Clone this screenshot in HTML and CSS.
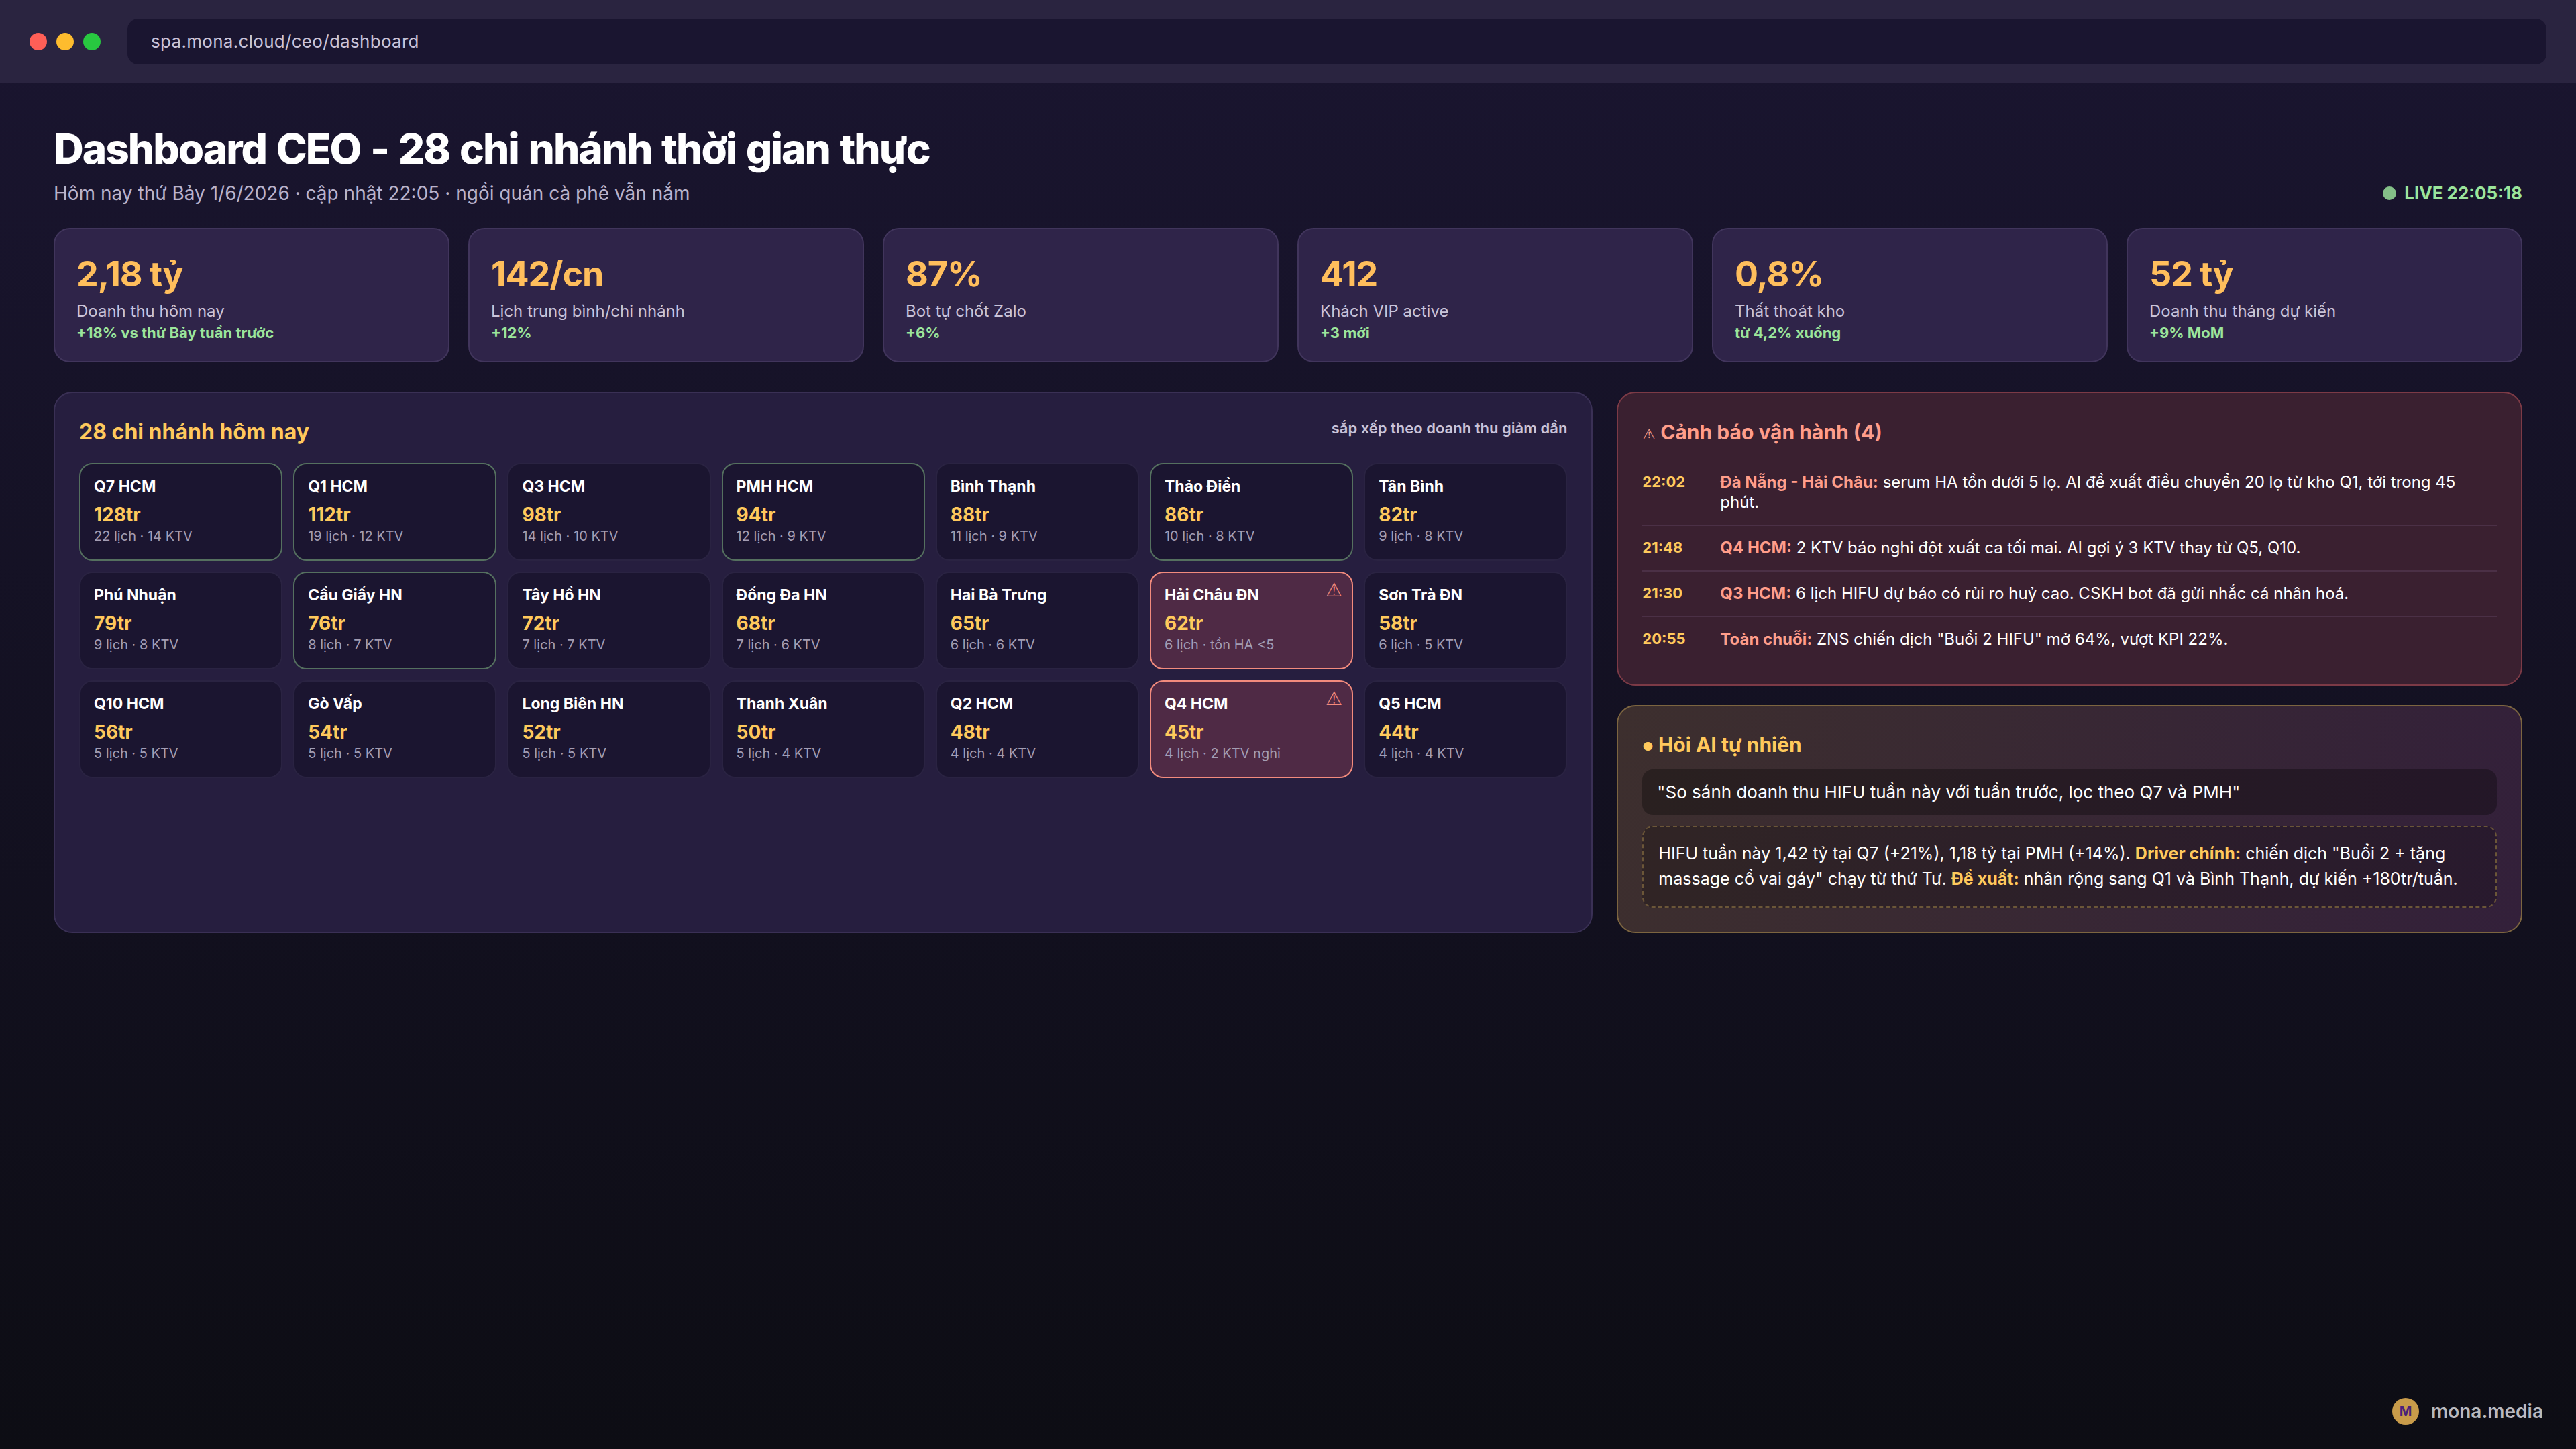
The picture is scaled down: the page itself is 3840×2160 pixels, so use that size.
FILE: index.html
```html
<!DOCTYPE html>
<html lang="vi">
<head>
    <meta charset="UTF-8">
    <title>Dashboard CEO - Mona</title>
    <link rel="stylesheet" href="styles.css">
</head>
<body>
    <div class="browser-bar">
        <div class="dots">
            <span class="dot red"></span>
            <span class="dot yellow"></span>
            <span class="dot green"></span>
        </div>
        <div class="url">spa.mona.cloud/ceo/dashboard</div>
    </div>

    <main class="page">
        <header class="page-head">
            <div>
                <h1>Dashboard CEO - 28 chi nhánh thời gian thực</h1>
                <p class="sub">Hôm nay thứ Bảy 1/6/2026 · cập nhật 22:05 · ngồi quán cà phê vẫn nắm</p>
            </div>
            <div class="live"><span class="live-dot"></span>LIVE 22:05:18</div>
        </header>

        <section class="stats">
            <div class="stat">
                <div class="stat-value">2,18 tỷ</div>
                <div class="stat-label">Doanh thu hôm nay</div>
                <div class="stat-delta">+18% vs thứ Bảy tuần trước</div>
            </div>
            <div class="stat">
                <div class="stat-value">142/cn</div>
                <div class="stat-label">Lịch trung bình/chi nhánh</div>
                <div class="stat-delta">+12%</div>
            </div>
            <div class="stat">
                <div class="stat-value">87%</div>
                <div class="stat-label">Bot tự chốt Zalo</div>
                <div class="stat-delta">+6%</div>
            </div>
            <div class="stat">
                <div class="stat-value">412</div>
                <div class="stat-label">Khách VIP active</div>
                <div class="stat-delta">+3 mới</div>
            </div>
            <div class="stat">
                <div class="stat-value">0,8%</div>
                <div class="stat-label">Thất thoát kho</div>
                <div class="stat-delta">từ 4,2% xuống</div>
            </div>
            <div class="stat">
                <div class="stat-value">52 tỷ</div>
                <div class="stat-label">Doanh thu tháng dự kiến</div>
                <div class="stat-delta">+9% MoM</div>
            </div>
        </section>

        <section class="columns">
            <div class="panel branches">
                <div class="panel-head">
                    <h2>28 chi nhánh hôm nay</h2>
                    <span class="panel-note">sắp xếp theo doanh thu giảm dần</span>
                </div>
                <div class="branch-grid">
                    <div class="branch top"><div class="b-name">Q7 HCM</div><div class="b-val">128tr</div><div class="b-meta">22 lịch · 14 KTV</div></div>
                    <div class="branch top"><div class="b-name">Q1 HCM</div><div class="b-val">112tr</div><div class="b-meta">19 lịch · 12 KTV</div></div>
                    <div class="branch"><div class="b-name">Q3 HCM</div><div class="b-val">98tr</div><div class="b-meta">14 lịch · 10 KTV</div></div>
                    <div class="branch top"><div class="b-name">PMH HCM</div><div class="b-val">94tr</div><div class="b-meta">12 lịch · 9 KTV</div></div>
                    <div class="branch"><div class="b-name">Bình Thạnh</div><div class="b-val">88tr</div><div class="b-meta">11 lịch · 9 KTV</div></div>
                    <div class="branch top"><div class="b-name">Thảo Điền</div><div class="b-val">86tr</div><div class="b-meta">10 lịch · 8 KTV</div></div>
                    <div class="branch"><div class="b-name">Tân Bình</div><div class="b-val">82tr</div><div class="b-meta">9 lịch · 8 KTV</div></div>

                    <div class="branch"><div class="b-name">Phú Nhuận</div><div class="b-val">79tr</div><div class="b-meta">9 lịch · 8 KTV</div></div>
                    <div class="branch top"><div class="b-name">Cầu Giấy HN</div><div class="b-val">76tr</div><div class="b-meta">8 lịch · 7 KTV</div></div>
                    <div class="branch"><div class="b-name">Tây Hồ HN</div><div class="b-val">72tr</div><div class="b-meta">7 lịch · 7 KTV</div></div>
                    <div class="branch"><div class="b-name">Đống Đa HN</div><div class="b-val">68tr</div><div class="b-meta">7 lịch · 6 KTV</div></div>
                    <div class="branch"><div class="b-name">Hai Bà Trưng</div><div class="b-val">65tr</div><div class="b-meta">6 lịch · 6 KTV</div></div>
                    <div class="branch warn"><span class="b-flag">⚠</span><div class="b-name">Hải Châu ĐN</div><div class="b-val">62tr</div><div class="b-meta">6 lịch · tồn HA &lt;5</div></div>
                    <div class="branch"><div class="b-name">Sơn Trà ĐN</div><div class="b-val">58tr</div><div class="b-meta">6 lịch · 5 KTV</div></div>

                    <div class="branch"><div class="b-name">Q10 HCM</div><div class="b-val">56tr</div><div class="b-meta">5 lịch · 5 KTV</div></div>
                    <div class="branch"><div class="b-name">Gò Vấp</div><div class="b-val">54tr</div><div class="b-meta">5 lịch · 5 KTV</div></div>
                    <div class="branch"><div class="b-name">Long Biên HN</div><div class="b-val">52tr</div><div class="b-meta">5 lịch · 5 KTV</div></div>
                    <div class="branch"><div class="b-name">Thanh Xuân</div><div class="b-val">50tr</div><div class="b-meta">5 lịch · 4 KTV</div></div>
                    <div class="branch"><div class="b-name">Q2 HCM</div><div class="b-val">48tr</div><div class="b-meta">4 lịch · 4 KTV</div></div>
                    <div class="branch warn"><span class="b-flag">⚠</span><div class="b-name">Q4 HCM</div><div class="b-val">45tr</div><div class="b-meta">4 lịch · 2 KTV nghỉ</div></div>
                    <div class="branch"><div class="b-name">Q5 HCM</div><div class="b-val">44tr</div><div class="b-meta">4 lịch · 4 KTV</div></div>
                </div>
            </div>

            <div class="side">
                <div class="panel alerts">
                    <h3 class="alerts-title"><span class="alerts-icon">⚠</span> Cảnh báo vận hành (4)</h3>
                    <div class="alert"><span class="alert-time">22:02</span><p><b>Đà Nẵng - Hải Châu:</b> serum HA tồn dưới 5 lọ. AI đề xuất điều chuyển 20 lọ từ kho Q1, tới trong 45 phút.</p></div>
                    <div class="alert"><span class="alert-time">21:48</span><p><b>Q4 HCM:</b> 2 KTV báo nghỉ đột xuất ca tối mai. AI gợi ý 3 KTV thay từ Q5, Q10.</p></div>
                    <div class="alert"><span class="alert-time">21:30</span><p><b>Q3 HCM:</b> 6 lịch HIFU dự báo có rủi ro huỷ cao. CSKH bot đã gửi nhắc cá nhân hoá.</p></div>
                    <div class="alert"><span class="alert-time">20:55</span><p><b>Toàn chuỗi:</b> ZNS chiến dịch "Buổi 2 HIFU" mở 64%, vượt KPI 22%.</p></div>
                </div>

                <div class="panel ask">
                    <h3 class="ask-title"><span class="ask-dot">●</span> Hỏi AI tự nhiên</h3>
                    <div class="ask-query">"So sánh doanh thu HIFU tuần này với tuần trước, lọc theo Q7 và PMH"</div>
                    <div class="ask-answer">HIFU tuần này 1,42 tỷ tại Q7 (+21%), 1,18 tỷ tại PMH (+14%). <b>Driver chính:</b> chiến dịch "Buổi 2 + tặng massage cổ vai gáy" chạy từ thứ Tư. <b>Đề xuất:</b> nhân rộng sang Q1 và Bình Thạnh, dự kiến +180tr/tuần.</div>
                </div>
            </div>
        </section>
    </main>

    <div class="brand">
        <span class="brand-logo">M</span>
        <span class="brand-name">mona.media</span>
    </div>
</body>
</html>
```

FILE: styles.css
```css
:root {
    --gold: #ffbe5c;
    --gold-soft: #ffc95c;
    --green: #9be59b;
    --salmon: #f28b7d;
    --text-soft: #c9c3d9;
}

* {
    box-sizing: border-box;
}

html, body {
    height: 100%;
}

body {
    margin: 0;
    min-height: 2160px;
    font-family: Inter, "Noto Sans", sans-serif;
    color: #fff;
    background: linear-gradient(180deg, #1a1530 0%, #0d0d14 100%);
    position: relative;
}

/* browser chrome */
.browser-bar {
    height: 124px;
    background: #2a2440;
    display: flex;
    align-items: center;
    padding: 0 44px;
    gap: 40px;
}

.dots {
    display: flex;
    gap: 14px;
}

.dot {
    width: 26px;
    height: 26px;
    border-radius: 50%;
}

.dot.red { background: #ff5f57; }
.dot.yellow { background: #febc2e; }
.dot.green { background: #28c840; }

.url {
    flex: 1;
    height: 68px;
    border-radius: 16px;
    background: #1a1530;
    color: #c9c3d9;
    font-size: 26px;
    letter-spacing: 0.3px;
    line-height: 68px;
    padding: 0 35px;
}

.page {
    padding: 59px 80px 0;
}

.page-head {
    display: flex;
    justify-content: space-between;
    align-items: flex-end;
}

h1 {
    margin: 0;
    font-size: 62px;
    line-height: 77px;
    font-weight: 800;
    letter-spacing: -2px;
    word-spacing: 3px;
}

.sub {
    margin: 11px 0 0;
    font-size: 28px;
    line-height: 34px;
    color: #b9b3cc;
}

.live {
    display: flex;
    align-items: center;
    gap: 12px;
    font-size: 26px;
    line-height: 34px;
    font-weight: 700;
    color: var(--green);
}

.live-dot {
    width: 20px;
    height: 20px;
    border-radius: 50%;
    background: #84c088;
}

/* stat cards */
.stats {
    display: grid;
    grid-template-columns: repeat(6, 1fr);
    gap: 28px;
    margin-top: 35px;
}

.stat {
    background: #2f2449;
    border: 2px solid #41355c;
    border-radius: 24px;
    padding: 36px 32px 26px;
    height: 200px;
}

.stat-value {
    font-size: 52px;
    line-height: 62px;
    font-weight: 700;
    letter-spacing: -1px;
    color: var(--gold);
}

.stat-label {
    margin-top: 7px;
    font-size: 24px;
    line-height: 34px;
    color: var(--text-soft);
}

.stat-delta {
    margin-top: 1px;
    font-size: 22px;
    line-height: 28px;
    font-weight: 700;
    color: var(--green);
}

/* main columns */
.columns {
    display: grid;
    grid-template-columns: 1.7fr 1fr;
    gap: 36px;
    margin-top: 44px;
}

.side {
    display: flex;
    flex-direction: column;
    gap: 29px;
}

.panel {
    border-radius: 28px;
    border: 2px solid #3a3055;
    padding: 36px;
}

.branches {
    background: #261e3f;
}

.panel-head {
    display: flex;
    justify-content: space-between;
    align-items: flex-start;
}

h2, h3 {
    margin: 0;
    line-height: 44px;
    font-weight: 700;
}

h2 {
    font-size: 32px;
    color: var(--gold-soft);
}

h3 {
    height: 44px;
    font-size: 30px;
}

.panel-note {
    font-size: 22px;
    line-height: 32px;
    font-weight: 600;
    color: var(--text-soft);
}

.branch-grid {
    display: grid;
    grid-template-columns: repeat(7, 1fr);
    gap: 16px;
    margin-top: 24px;
}

.branch {
    position: relative;
    height: 146px;
    background: #1b1530;
    border: 2px solid #2a2342;
    border-radius: 20px;
    padding: 18px 20px 0;
}

.branch.top {
    border-color: #55705f;
}

.branch.warn {
    background: #4f2a45;
    border-color: var(--salmon);
}

.b-name {
    font-size: 23px;
    line-height: 30px;
    font-weight: 700;
}

.b-val {
    margin-top: 9px;
    font-size: 28px;
    line-height: 36px;
    font-weight: 700;
    color: var(--gold-soft);
}

.b-meta {
    margin-top: 1px;
    font-size: 20px;
    line-height: 26px;
    color: #a39db3;
}

.b-flag {
    position: absolute;
    top: 8px;
    right: 14px;
    font-family: "DejaVu Sans", sans-serif;
    font-size: 28px;
    line-height: 36px;
    color: var(--salmon);
}

/* alerts */
.alerts {
    background: #3a2030;
    border-color: #7c3a46;
}

.alerts-title {
    margin-bottom: 20px;
    color: #ff9d8a;
}

.alerts-icon {
    font-family: "DejaVu Sans", sans-serif;
    font-size: 22px;
    font-weight: 400;
}

.alert {
    display: grid;
    grid-template-columns: 116px 1fr;
    padding: 18px 0;
    border-bottom: 2px solid #4b3046;
}

.alert:last-child {
    border-bottom: none;
    padding-bottom: 16px;
}

.alert-time {
    font-size: 22px;
    line-height: 28px;
    font-weight: 700;
    color: var(--gold-soft);
}

.alert p {
    margin: 0;
    font-size: 24px;
    line-height: 30px;
}

.alert b {
    color: #ff9d8a;
}

/* ask AI */
.ask {
    background: linear-gradient(100deg, #3d2f2e 0%, #33203a 100%);
    border-color: #7c6540;
    padding-top: 35px;
}

.ask-title {
    color: var(--gold-soft);
}

.ask-dot {
    font-size: 18px;
    vertical-align: 2px;
}

.ask-query {
    margin-top: 15px;
    height: 68px;
    padding: 0 22px;
    border-radius: 16px;
    background: rgba(0, 0, 0, 0.3);
    font-size: 26px;
    line-height: 68px;
}

.ask-answer {
    margin-top: 16px;
    padding: 20px 22px 22px;
    border: 2px dashed #6b5638;
    border-radius: 16px;
    background: rgba(0, 0, 0, 0.2);
    font-size: 25px;
    line-height: 38px;
}

.ask-answer b {
    color: var(--gold-soft);
}

.brand {
    position: absolute;
    right: 49px;
    bottom: 36px;
    display: flex;
    align-items: center;
    gap: 18px;
}

.brand-logo {
    width: 40px;
    height: 40px;
    border-radius: 50%;
    background: #c89b4a;
    color: #4a1f7a;
    font-size: 20px;
    font-weight: 700;
    display: flex;
    align-items: center;
    justify-content: center;
}

.brand-name {
    font-size: 28px;
    font-weight: 600;
    color: #b9b9bf;
}
```
